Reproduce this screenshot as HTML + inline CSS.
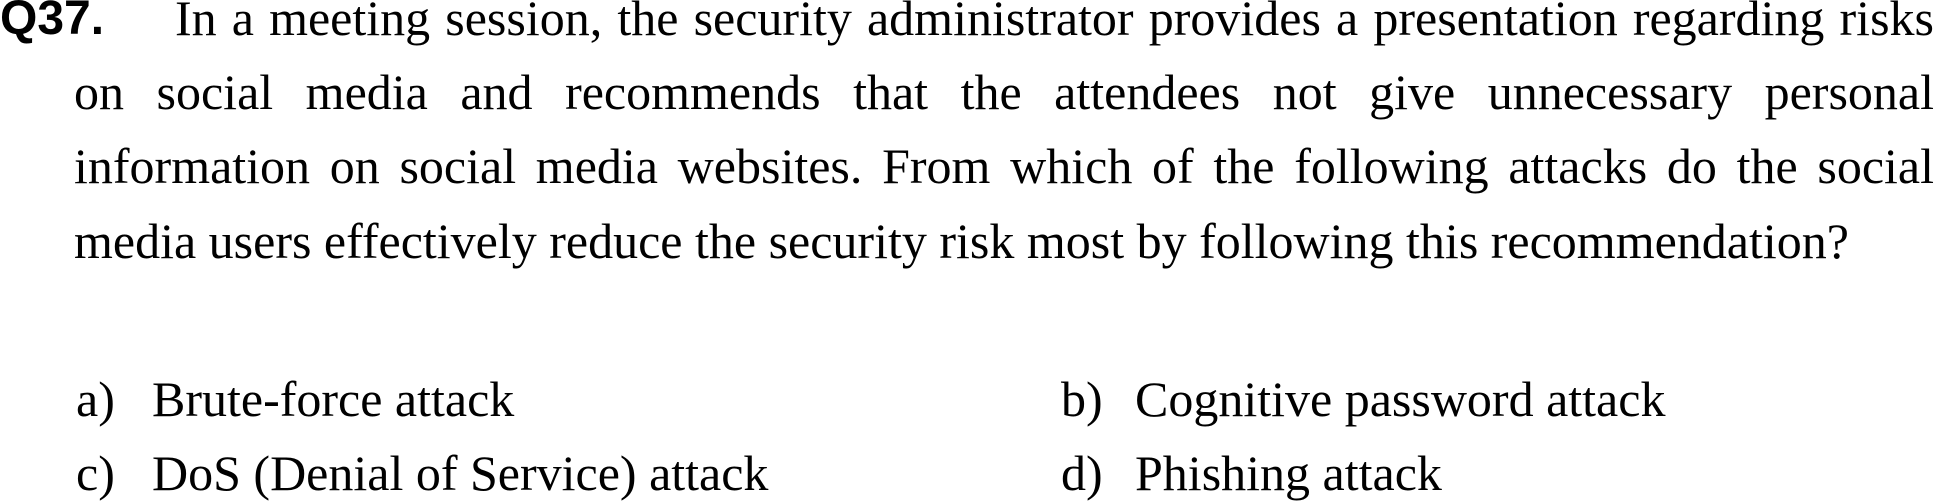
<!DOCTYPE html>
<html><head><meta charset="utf-8"><style>
html,body{margin:0;padding:0;background:#fff;width:1934px;height:501px;overflow:hidden;position:relative}
.q{position:absolute;left:0;top:-5px;font:bold 48px/48px "Liberation Sans",sans-serif;color:#000}
.l{position:absolute;font:50px/50px "Liberation Serif",serif;color:#000;white-space:nowrap}
.j{text-align:justify;text-align-last:justify;white-space:normal}
</style></head><body>
<div class="q">Q37.</div>
<div class="l j" style="left:175px;width:1759px;top:-7px">In a meeting session, the security administrator provides a presentation regarding risks</div>
<div class="l j" style="left:74px;width:1860px;top:67px">on social media and recommends that the attendees not give unnecessary personal</div>
<div class="l j" style="left:74px;width:1860px;top:141px">information on social media websites. From which of the following attacks do the social</div>
<div class="l" style="left:74px;top:216px">media users effectively reduce the security risk most by following this recommendation?</div>
<div class="l" style="left:76px;top:374px">a)</div>
<div class="l" style="left:152px;top:374px">Brute-force attack</div>
<div class="l" style="left:1061px;top:374px">b)</div>
<div class="l" style="left:1135px;top:374px">Cognitive password attack</div>
<div class="l" style="left:76px;top:448px">c)</div>
<div class="l" style="left:152px;top:448px">DoS (Denial of Service) attack</div>
<div class="l" style="left:1061px;top:448px">d)</div>
<div class="l" style="left:1135px;top:448px">Phishing attack</div>
</body></html>
